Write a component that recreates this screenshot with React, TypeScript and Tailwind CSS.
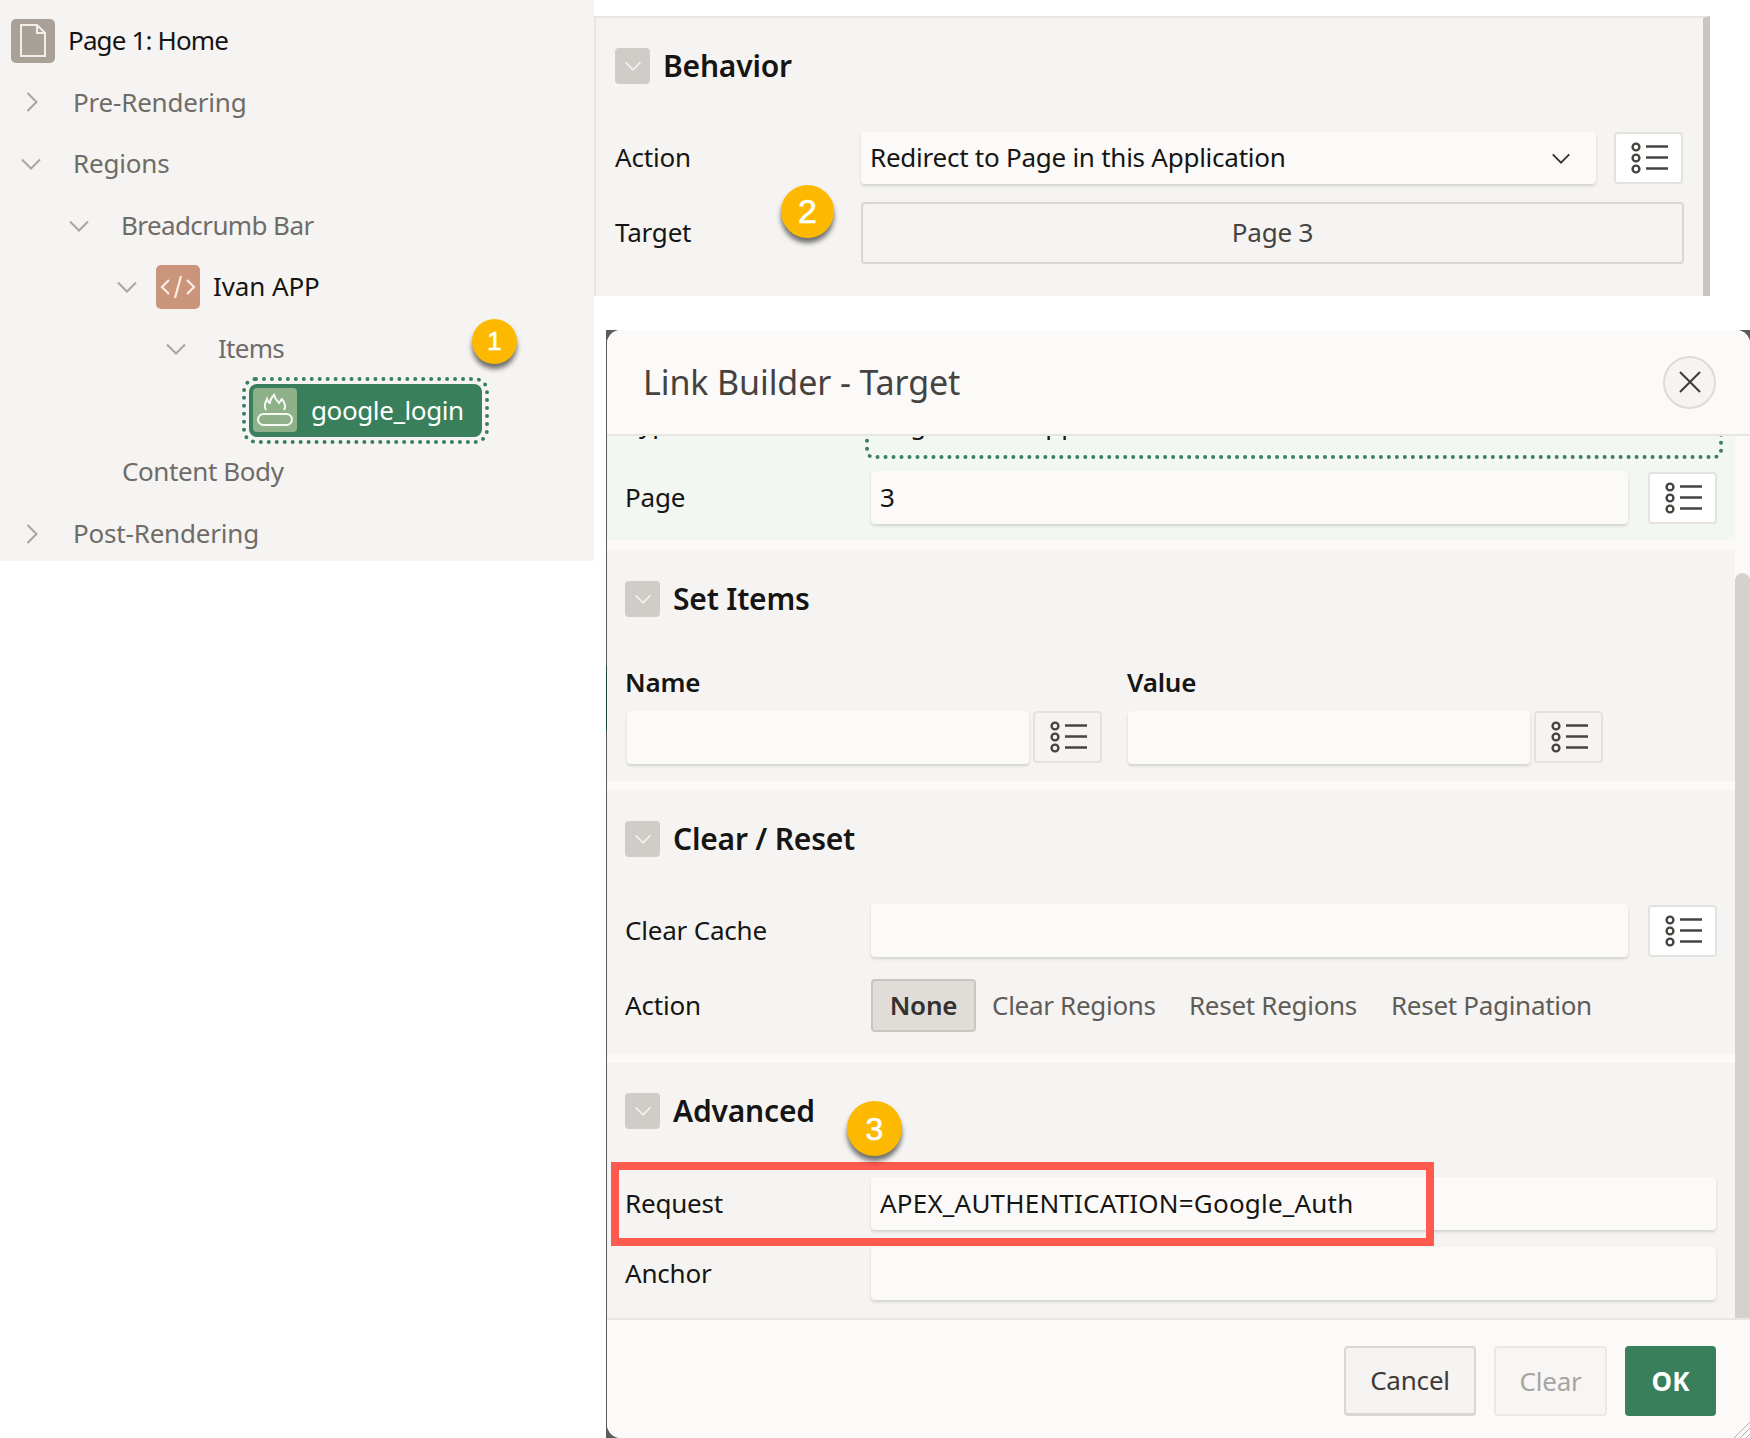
import React from "react";

const font = { fontFamily: '"Noto Sans", sans-serif' };

function Chevron({ dir, className }: { dir: "right" | "down"; className?: string }) {
  return dir === "down" ? (
    <svg viewBox="0 0 20 12" className={className} fill="none" stroke="currentColor" strokeWidth="2">
      <path d="M1 1.5 L10 10.5 L19 1.5" />
    </svg>
  ) : (
    <svg viewBox="0 0 12 20" className={className} fill="none" stroke="currentColor" strokeWidth="2">
      <path d="M1.5 1 L10.5 10 L1.5 19" />
    </svg>
  );
}

function ListIcon() {
  return (
    <svg width="38" height="34" viewBox="0 0 38 34" fill="none" stroke="#47443f" strokeWidth="2.4">
      <circle cx="5" cy="6" r="3.4" />
      <circle cx="5" cy="17" r="3.4" />
      <circle cx="5" cy="28" r="3.4" />
      <path d="M15 5.5 H37 M15 16.5 H37 M15 27.5 H37" />
    </svg>
  );
}

function ListBtn({ tinted }: { tinted?: boolean }) {
  return (
    <div
      className={`flex h-[52px] w-[69px] shrink-0 items-center justify-center rounded-[4px] border-2 border-[#e3e2df] pl-[2px] ${
        tinted ? "bg-[#f5f4f2]" : "bg-white"
      }`}
    >
      <ListIcon />
    </div>
  );
}

function Badge({ n, className }: { n: string; className: string }) {
  return (
    <div
      className={`absolute z-20 flex items-center justify-center rounded-full bg-[#fdb900] font-['Liberation_Sans',sans-serif] font-normal text-white shadow-[0_5px_5px_rgba(0,0,0,0.55)] [-webkit-text-stroke:0.6px_white] ${className}`}
    >
      {n}
    </div>
  );
}

function SectionHead({ title }: { title: string }) {
  return (
    <div className="flex items-center">
      <div className="flex h-[36px] w-[35px] items-center justify-center rounded-[4px] bg-[#d0ccc8] text-[#f5f4f2]">
        <Chevron dir="down" className="h-[10px] w-[18px]" />
      </div>
      <div className="ml-[13px] text-[30px] leading-none font-semibold tracking-[-0.2px] text-[#161513]">{title}</div>
    </div>
  );
}

function Input({ value, className }: { value?: string; className: string }) {
  return (
    <div
      className={`flex h-[53px] items-center rounded-[4px] bg-[#fbfaf8] pl-[9px] text-[26px] text-[#161513] shadow-[0_2px_3px_rgba(0,0,0,0.14)] ${className}`}
    >
      {value}
    </div>
  );
}

function Label({ children }: { children: React.ReactNode }) {
  return <div className="w-[264px] shrink-0 pl-[18px] text-[26px] tracking-[-0.2px] text-[#161513]">{children}</div>;
}

function TreeRow({ indent, children }: { indent: number; children: React.ReactNode }) {
  return (
    <div className="relative flex h-[61.6px] items-center" style={{ paddingLeft: indent }}>
      {children}
    </div>
  );
}

function TreeText({ children, className }: { children: React.ReactNode; className?: string }) {
  return <span className={`text-[26px] text-[#6f6c68] ${className ?? "tracking-[-0.2px]"}`}>{children}</span>;
}

function ChevSlot({ dir, width }: { dir: "right" | "down"; width: number }) {
  return (
    <span className="flex shrink-0 items-center text-[#a9a6a2]" style={{ width }}>
      {dir === "down" ? (
        <Chevron dir="down" className="h-[12px] w-[20px]" />
      ) : (
        <Chevron dir="right" className="ml-[5px] h-[20px] w-[12px]" />
      )}
    </span>
  );
}

export default function App() {
  return (
    <div className="flex h-[1438px] w-[1750px] items-start overflow-hidden bg-white" style={font}>
      {/* Tree */}
      <div className="relative h-[561px] w-[594px] shrink-0 bg-[#f5f4f2] pt-[10px]">
        <TreeRow indent={11}>
          <span className="mr-[13px] flex h-[44px] w-[44px] items-center justify-center rounded-[5px] bg-[#a9a198]">
            <svg width="30" height="36" viewBox="0 0 30 36" fill="none" stroke="#f0eeeb" strokeWidth="2">
              <path d="M3 2 H19 L27 10 V33 H3 Z" />
              <path d="M19 2 V10 H27" />
            </svg>
          </span>
          <span className="text-[26px] tracking-[-0.85px] text-[#161513]">Page 1: Home</span>
        </TreeRow>
        <TreeRow indent={21}>
          <ChevSlot dir="right" width={52} />
          <TreeText>Pre-Rendering</TreeText>
        </TreeRow>
        <TreeRow indent={21}>
          <ChevSlot dir="down" width={52} />
          <TreeText>Regions</TreeText>
        </TreeRow>
        <TreeRow indent={69}>
          <ChevSlot dir="down" width={52} />
          <TreeText className="tracking-[-0.6px]">Breadcrumb Bar</TreeText>
        </TreeRow>
        <TreeRow indent={117}>
          <ChevSlot dir="down" width={39} />
          <span className="mr-[13px] flex h-[44px] w-[44px] items-center justify-center rounded-[5px] bg-[#cb957b]">
            <svg width="36" height="26" viewBox="0 0 36 26" fill="none" stroke="#fbeee4" strokeWidth="2.2">
              <path d="M9 6 L2 13 L9 20 M27 6 L34 13 L27 20 M21 2 L15 24" />
            </svg>
          </span>
          <span className="-translate-y-px text-[26px] tracking-[-0.1px] text-[#161513]">Ivan APP</span>
        </TreeRow>
        <TreeRow indent={166}>
          <ChevSlot dir="down" width={52} />
          <TreeText className="tracking-[-0.7px]">Items</TreeText>
        </TreeRow>
        <TreeRow indent={242}>
          <div className="shrink-0 rounded-[14px] border-[4px] border-dotted border-[#3a7f5b] p-[3px]">
            <div className="flex h-[53px] w-[233px] items-center rounded-[8px] bg-[#3a7f5b] pl-[4px]">
              <span className="flex h-[44px] w-[44px] items-center justify-center rounded-[4px] bg-[#8fb18a]">
                <svg width="38" height="34" viewBox="0 0 38 34" fill="none" stroke="#f6f8f2" strokeWidth="2">
                  <rect x="2" y="21" width="34" height="11" rx="5.5" />
                  <path d="M10 17 C7 12 10 9 11 6 C12 9 13 10 14 10 C14 7 16 4 18 2 C19 6 21 8 23 10 C24 9 25 7 26 6 C29 10 30 14 28 17" />
                </svg>
              </span>
              <span className="ml-[14px] text-[26px] tracking-[-0.4px] text-white">google_login</span>
            </div>
          </div>
        </TreeRow>
        <TreeRow indent={122}>
          <TreeText className="tracking-[-0.4px]">Content Body</TreeText>
        </TreeRow>
        <TreeRow indent={21}>
          <ChevSlot dir="right" width={52} />
          <TreeText>Post-Rendering</TreeText>
        </TreeRow>
        <Badge n="1" className="top-[319px] left-[472px] h-[45px] w-[45px] text-[26px]" />
      </div>

      {/* Right column */}
      <div className="flex min-w-0 flex-1 flex-col pt-[16px]">
        {/* Behavior */}
        <div className="relative h-[280px] w-[1116px] border-t-2 border-r-[7px] border-l-2 border-t-[#e8e6e3] border-r-[#c9c5c1] border-l-[#e8e6e3] bg-[#f5f4f2] pt-[30px] pl-[19px]">
          <SectionHead title="Behavior" />
          <div className="mt-[48px] flex h-[52px] items-center">
            <div className="w-[246px] shrink-0 -translate-y-px text-[26px] tracking-[-0.2px] text-[#161513]">Action</div>
            <div className="flex h-[52px] w-[735px] items-center justify-between rounded-[4px] bg-[#fbfaf8] pr-[25px] pl-[9px] text-[26px] tracking-[-0.25px] text-[#161513] shadow-[0_2px_3px_rgba(0,0,0,0.14)]">
              <span className="-translate-y-px">Redirect to Page in this Application</span>
              <Chevron dir="down" className="h-[11px] w-[20px] text-[#33302d]" />
            </div>
            <div className="ml-[18px]">
              <ListBtn />
            </div>
          </div>
          <div className="mt-[18px] flex h-[62px] items-center">
            <div className="w-[246px] shrink-0 -translate-y-px text-[26px] tracking-[-0.2px] text-[#161513]">Target</div>
            <div className="flex h-[62px] w-[823px] items-center justify-center rounded-[4px] border-2 border-[#d9d7d4] bg-[#f5f4f2] text-[26px] tracking-[-0.2px] text-[#45423f]">
              <span className="-translate-y-px">Page 3</span>
            </div>
          </div>
          <Badge n="2" className="top-[167px] left-[185px] h-[53px] w-[53px] text-[34px]" />
        </div>

        {/* Dialog */}
        <div className="relative mt-[34px] ml-[12px] h-[1108px] bg-[#5c5c5c] pl-px">
          <div className="absolute top-[336px] left-0 z-10 h-[65px] w-px bg-[#1f4a3a]" />
          <div className="flex h-full flex-col overflow-hidden rounded-t-[14px] rounded-bl-[14px] bg-[#fbfaf8]">
            <div className="relative z-10 flex h-[106px] shrink-0 items-center justify-between border-b-2 border-[#e8e6e3] bg-[#fbfaf8] pr-[34px] pl-[36px]">
              <div className="text-[34px] tracking-[-0.1px] text-[#45423f]">Link Builder - Target</div>
              <div className="flex h-[53px] w-[53px] items-center justify-center rounded-full border-2 border-[#dddbd8] bg-[#f5f4f2]">
                <svg width="24" height="24" viewBox="0 0 24 24" fill="none" stroke="#3d3a37" strokeWidth="2">
                  <path d="M2 2 L22 22 M22 2 L2 22" />
                </svg>
              </div>
            </div>

            <div className="flex min-h-0 flex-1 overflow-hidden">
              <div className="w-[1128px] shrink-0">
                {/* Target section */}
                <div className="flex h-[104px] flex-col bg-[#f3f7f1]">
                  <div className="-mt-[29px] flex h-[52px] shrink-0 items-start">
                    <div className="w-[258px] shrink-0 pl-[18px] text-[26px] leading-[32px] text-[#161513]">Type</div>
                    <div className="h-[52px] w-[858px] shrink-0 rounded-[8px] border-[4px] border-dotted border-[#3a7f5b] pl-[11px] text-[26px] leading-[26px] text-[#161513]">
                      Page in this Application
                    </div>
                  </div>
                  <div className="mt-[12px] flex items-center">
                    <Label>Page</Label>
                    <Input value="3" className="w-[757px] shrink-0" />
                    <div className="ml-[20px]">
                      <ListBtn />
                    </div>
                  </div>
                </div>

                {/* Set Items */}
                <div className="mt-[10px] h-[231px] bg-[#f5f4f2] pt-[31px] pl-[18px]">
                  <SectionHead title="Set Items" />
                  <div className="mt-[47px] flex h-[36px] items-center text-[26px] font-semibold tracking-[-0.2px] text-[#161513]">
                    <div className="w-[502px]">Name</div>
                    <div>Value</div>
                  </div>
                  <div className="mt-[11px] ml-[2px] flex items-start">
                    <Input className="w-[402px] shrink-0" />
                    <div className="ml-[4px]">
                      <ListBtn tinted />
                    </div>
                    <Input className="ml-[26px] w-[402px] shrink-0" />
                    <div className="ml-[4px]">
                      <ListBtn tinted />
                    </div>
                  </div>
                </div>

                {/* Clear / Reset */}
                <div className="mt-[9px] h-[264px] bg-[#f5f4f2] pt-[31px]">
                  <div className="pl-[18px]">
                    <SectionHead title="Clear / Reset" />
                  </div>
                  <div className="mt-[47px] flex items-center">
                    <Label>Clear Cache</Label>
                    <Input className="w-[757px] shrink-0" />
                    <div className="ml-[20px]">
                      <ListBtn />
                    </div>
                  </div>
                  <div className="mt-[22px] flex items-center">
                    <Label>Action</Label>
                    <div className="flex h-[53px] w-[105px] shrink-0 items-center justify-center rounded-[4px] border-2 border-[#c9c6c2] bg-[#e0ddd9] font-semibold text-[#33302d]">
                      <span className="text-[26px] tracking-[-0.2px]">None</span>
                    </div>
                    <div className="flex text-[26px] tracking-[-0.3px] text-[#5f5c58]">
                      <span className="ml-[16px] w-[197px]">Clear Regions</span>
                      <span className="w-[202px]">Reset Regions</span>
                      <span>Reset Pagination</span>
                    </div>
                  </div>
                </div>

                {/* Advanced */}
                <div className="mt-[9px] h-[255px] bg-[#f5f4f2] pt-[30px]">
                  <div className="pl-[18px]">
                    <SectionHead title="Advanced" />
                  </div>
                  <div className="relative mt-[48px] flex items-center">
                    <Label>Request</Label>
                    <Input value="APEX_AUTHENTICATION=Google_Auth" className="w-[845px] shrink-0 tracking-[0.2px]" />
                    <div className="absolute -top-[15px] left-[4px] h-[84px] w-[823px] border-[8px] border-[#ff5a4d]" />
                    <Badge n="3" className="-top-[76px] left-[240px] h-[55px] w-[55px] text-[32px]" />
                  </div>
                  <div className="mt-[17px] flex items-center">
                    <Label>Anchor</Label>
                    <Input className="w-[845px] shrink-0" />
                  </div>
                </div>
              </div>
              <div className="flex-1 pt-[137px]">
                <div className="h-full rounded-t-full bg-[#d5d2ce]" />
              </div>
            </div>

            {/* Footer */}
            <div className="relative flex h-[120px] shrink-0 items-start justify-end gap-[18px] border-t-2 border-[#e8e6e3] bg-[#fbfaf8] pt-[26px] pr-[34px]">
              <div className="flex h-[70px] w-[132px] items-center justify-center rounded-[4px] border-2 border-b-[3px] border-[#d9d7d4] bg-[#f5f4f2] text-[26px] tracking-[-0.2px] text-[#3d3a37]">
                Cancel
              </div>
              <div className="flex h-[70px] w-[113px] items-center justify-center rounded-[4px] border-2 border-[#ebe9e6] bg-[#f7f6f4] text-[26px] tracking-[-0.2px] text-[#a8a5a1]">
                Clear
              </div>
              <div className="flex h-[70px] w-[91px] items-center justify-center rounded-[4px] bg-[#3a7f5b] text-[26px] font-bold text-white">
                OK
              </div>
              <svg className="absolute right-0 bottom-0" width="18" height="18" viewBox="0 0 18 18" stroke="#b5b2ae" strokeWidth="1">
                <path d="M18 2 L2 18 M18 8 L8 18 M18 14 L14 18" />
              </svg>
            </div>
          </div>
        </div>
      </div>
    </div>
  );
}
